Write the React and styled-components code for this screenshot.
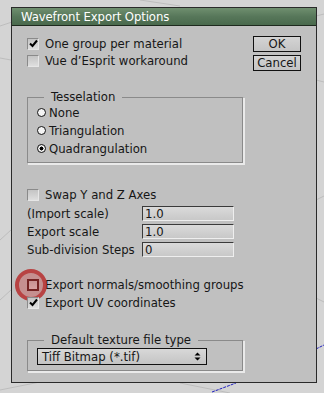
import styled, { createGlobalStyle } from 'styled-components'

const GlobalStyle = createGlobalStyle`
    html, body {
        margin: 0;
        padding: 0;
    }
    body {
        background: #d4d4d4;
        width: 324px;
        height: 393px;
        overflow: hidden;
        font-family: "DejaVu Sans Condensed", "DejaVu Sans", sans-serif;
        font-size: 13px;
        color: #161616;
    }
`

const Backdrop = () => (
    <BackdropSvg width="324" height="393" viewBox="0 0 324 393">
        <g stroke="#bdbdbd" strokeWidth="1" fill="none">
            <path d="M0 26 L12 22" />
            <path d="M0 58 L11 60" />
            <path d="M316 16 L324 14" />
            <path d="M316 80 L324 82" />
            <path d="M316 200 L324 196" />
            <path d="M0 240 L11 230" />
            <path d="M0 300 L11 290" />
            <path d="M0 390 L40 382" />
            <path d="M140 0 L180 6" />
            <path d="M316 298 L324 302" />
            <path d="M180 383 L230 393" />
        </g>
        <path d="M212 392 L236 383" stroke="#2020c0" strokeWidth="1" strokeDasharray="3 1" />
        <path d="M316 349 L324 345" stroke="#2020c0" strokeWidth="1" strokeDasharray="3 1" />
    </BackdropSvg>
)

const BackdropSvg = styled.svg`
    position: absolute;
    left: 0;
    top: 0;
    z-index: 0;
`

const Check = ({ checked, label, highlight }) => (
    <CheckRow>
        <Box $highlight={highlight}>
            {highlight && <Halo />}
            {checked && (
                <svg width="9" height="9" viewBox="0 0 9 9">
                    <path d="M1 4.5 L3.5 7 L8 1.5" stroke="#000" strokeWidth="2" fill="none" />
                </svg>
            )}
        </Box>
        <span>{label}</span>
    </CheckRow>
)

const Radio = ({ checked, label }) => (
    <RadioRow>
        <Dot $checked={checked} />
        <span>{label}</span>
    </RadioRow>
)

const App = () => {
    return (
        <>
            <GlobalStyle />
            <Backdrop />
            <Dialog>
                <TitleBar>Wavefront Export Options</TitleBar>
                <Content>
                    <TopRow>
                        <Checks>
                            <Check checked label="One group per material" />
                            <Check label="Vue d’Esprit workaround" />
                        </Checks>
                        <Buttons>
                            <Button>OK</Button>
                            <Button>Cancel</Button>
                        </Buttons>
                    </TopRow>

                    <Group $height={67} $top={26}>
                        <Legend>Tesselation</Legend>
                        <Radios>
                            <Radio label="None" />
                            <Radio label="Triangulation" />
                            <Radio checked label="Quadrangulation" />
                        </Radios>
                    </Group>

                    <Section>
                        <Check label="Swap Y and Z Axes" />
                        <Fields>
                            <Label>(Import scale)</Label>
                            <Field>1.0</Field>
                            <Label>Export scale</Label>
                            <Field>1.0</Field>
                            <Label>Sub-division Steps</Label>
                            <Field>0</Field>
                        </Fields>
                    </Section>

                    <Lower>
                        <Check highlight label="Export normals/smoothing groups" />
                        <Check checked label="Export UV coordinates" />
                    </Lower>

                    <Group $height={32} $top={29}>
                        <Legend>Default texture file type</Legend>
                        <Select>
                            <span>Tiff Bitmap (*.tif)</span>
                            <svg width="7" height="9" viewBox="0 0 7 9">
                                <path d="M0.5 3.5 L3.5 0.5 L6.5 3.5 Z M0.5 5.5 L3.5 8.5 L6.5 5.5 Z" fill="#000" />
                            </svg>
                        </Select>
                    </Group>
                </Content>
            </Dialog>
        </>
    )
}

const Dialog = styled.div`
    position: relative;
    z-index: 1;
    margin: 7px 0 0 11px;
    width: 304px;
    height: 374px;
    border: 1px solid #2a2a2a;
    background: #c0c0c0;
    display: flex;
    flex-direction: column;
`

const TitleBar = styled.div`
    height: 17px;
    border-bottom: 1px solid #1e2a1e;
    background: linear-gradient(#6f8f6f, #57775a 50%, #4a6a4d);
    color: #fff;
    font-size: 13px;
    line-height: 17px;
    padding-left: 9px;
    letter-spacing: -0.1px;
`

const Content = styled.div`
    padding: 0 0 0 15px;
    display: flex;
    flex-direction: column;
`

const TopRow = styled.div`
    display: flex;
    justify-content: space-between;
    padding-top: 9px;
    padding-right: 15px;
`

const Checks = styled.div`
    display: flex;
    flex-direction: column;
`

const CheckRow = styled.div`
    display: flex;
    align-items: center;
    gap: 6px;
    height: 17px;
    white-space: nowrap;
`

const Box = styled.div`
    position: relative;
    box-sizing: border-box;
    width: 12px;
    height: 12px;
    border: 1px solid ${p => (p.$highlight ? '#3a0a0a' : '#8a8a8a')};
    border-right-color: ${p => (p.$highlight ? '#3a0a0a' : '#e6e6e6')};
    border-bottom-color: ${p => (p.$highlight ? '#3a0a0a' : '#e6e6e6')};
    background: linear-gradient(#c4c4c4, #dedede);
    display: flex;
    align-items: center;
    justify-content: center;
    ${p => p.$highlight && 'border-width: 2px;'}
`

const Halo = styled.div`
    position: absolute;
    left: -14px;
    top: -12px;
    width: 32px;
    height: 32px;
    border-radius: 50%;
    box-sizing: border-box;
    border: 4px solid rgba(178, 34, 34, 0.7);
    background: rgba(205, 70, 70, 0.4);
    pointer-events: none;
`

const Buttons = styled.div`
    display: flex;
    flex-direction: column;
    gap: 3px;
    padding-top: 1px;
`

const Button = styled.div`
    box-sizing: border-box;
    width: 48px;
    height: 16px;
    border: 1px solid #111;
    background: linear-gradient(#d4d4d4, #c4c4c4);
    text-align: center;
    font-size: 13px;
    line-height: 14px;
`

const Group = styled.div`
    position: relative;
    box-sizing: border-box;
    margin-top: ${p => p.$top}px;
    width: 217px;
    height: ${p => p.$height}px;
    border: 1px solid #8a8a8a;
    border-right-color: #eaeaea;
    border-bottom-color: #eaeaea;
    box-shadow: inset -1px -1px 0 #8a8a8a, 1px 1px 0 #eaeaea;
    padding: 6px 0 0 9px;
`

const Legend = styled.div`
    position: absolute;
    top: -9px;
    left: 16px;
    padding: 0 7px;
    background: #c0c0c0;
    line-height: 16px;
`

const Radios = styled.div`
    display: flex;
    flex-direction: column;
    gap: 1px;
`

const RadioRow = styled.div`
    display: flex;
    align-items: center;
    gap: 3px;
    height: 17px;
`

const Dot = styled.div`
    box-sizing: border-box;
    width: 9px;
    height: 9px;
    border-radius: 50%;
    border: 1px solid #111;
    background: ${p => (p.$checked ? 'radial-gradient(circle, #000 0 1.8px, #f4f4f4 2.2px)' : '#f4f4f4')};
`

const Section = styled.div`
    margin-top: 22px;
    display: flex;
    flex-direction: column;
`

const Fields = styled.div`
    display: grid;
    grid-template-columns: 115px 92px;
    row-gap: 3px;
    align-items: center;
    margin-top: 3px;
`

const Label = styled.div`
    white-space: nowrap;
    font-size: 13px;
`

const Field = styled.div`
    box-sizing: border-box;
    height: 15px;
    border: 1px solid #3a3a3a;
    border-right-color: #eeeeee;
    border-bottom-color: #eeeeee;
    background: linear-gradient(#dadada, #c8c8c8);
    padding-left: 2px;
    line-height: 13px;
`

const Lower = styled.div`
    margin-top: 19px;
    display: flex;
    flex-direction: column;
    gap: 1px;
`

const Select = styled.div`
    box-sizing: border-box;
    width: 170px;
    height: 17px;
    margin-top: 1px;
    border: 1px solid #111;
    background: linear-gradient(#d8d8d8, #c4c4c4);
    display: flex;
    align-items: center;
    justify-content: space-between;
    padding: 0 5px 0 4px;
`

export default App
